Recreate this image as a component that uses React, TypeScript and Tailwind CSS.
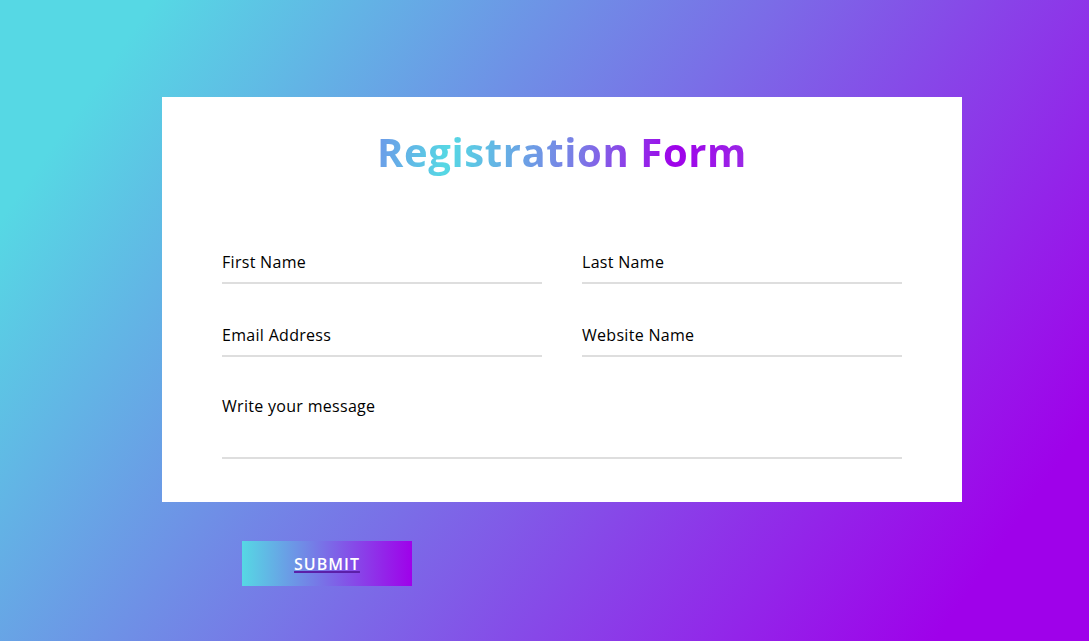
import React from "react";

function Field({ label }: { label: string }) {
  return (
    <div className="flex h-[40px] items-end border-b-2 border-[#dedede] pb-[8px]">
      <span className="text-[16px] leading-[24px] tracking-[0.3px] text-black">{label}</span>
    </div>
  );
}

export default function App() {
  return (
    <div
      className="min-h-[641px] w-full bg-[linear-gradient(125deg,#56d8e4_10%,#9f01ea_90%)] pt-[97px]"
      style={{ fontFamily: '"Open Sans", "Noto Sans", sans-serif' }}
    >
      <div className="ml-[162px] w-[800px] bg-white px-[60px] pt-[31px] pb-[43px]">
        <h1 className="text-center text-[40px] font-bold leading-[48px] tracking-[0.6px]">
          <span className="bg-[linear-gradient(100deg,#6d97e9_0%,#56d8e4_20%,#7b7ae6_55%,#9f01ea_80%,#9a2be6_100%)] bg-clip-text text-transparent">
            Registration Form
          </span>
        </h1>
        <div className="mt-[68px] grid grid-cols-2 gap-x-[40px] gap-y-[33px]">
          <Field label="First Name" />
          <Field label="Last Name" />
          <Field label="Email Address" />
          <Field label="Website Name" />
          <div className="col-span-2 h-[69px] border-b-2 border-[#dedede] pt-[4px]">
            <span className="text-[16px] leading-[24px] tracking-[0.3px] text-black">Write your message</span>
          </div>
        </div>
      </div>
      <div className="ml-[242px] mt-[39px] flex h-[45px] w-[170px] items-center justify-center bg-[linear-gradient(to_right,#56d8e4,#9f01ea)]">
        <span className="text-[16px] font-semibold uppercase tracking-[1px] text-white underline decoration-[#5b1fa8] decoration-2 underline-offset-[1px]">
          Submit
        </span>
      </div>
    </div>
  );
}
